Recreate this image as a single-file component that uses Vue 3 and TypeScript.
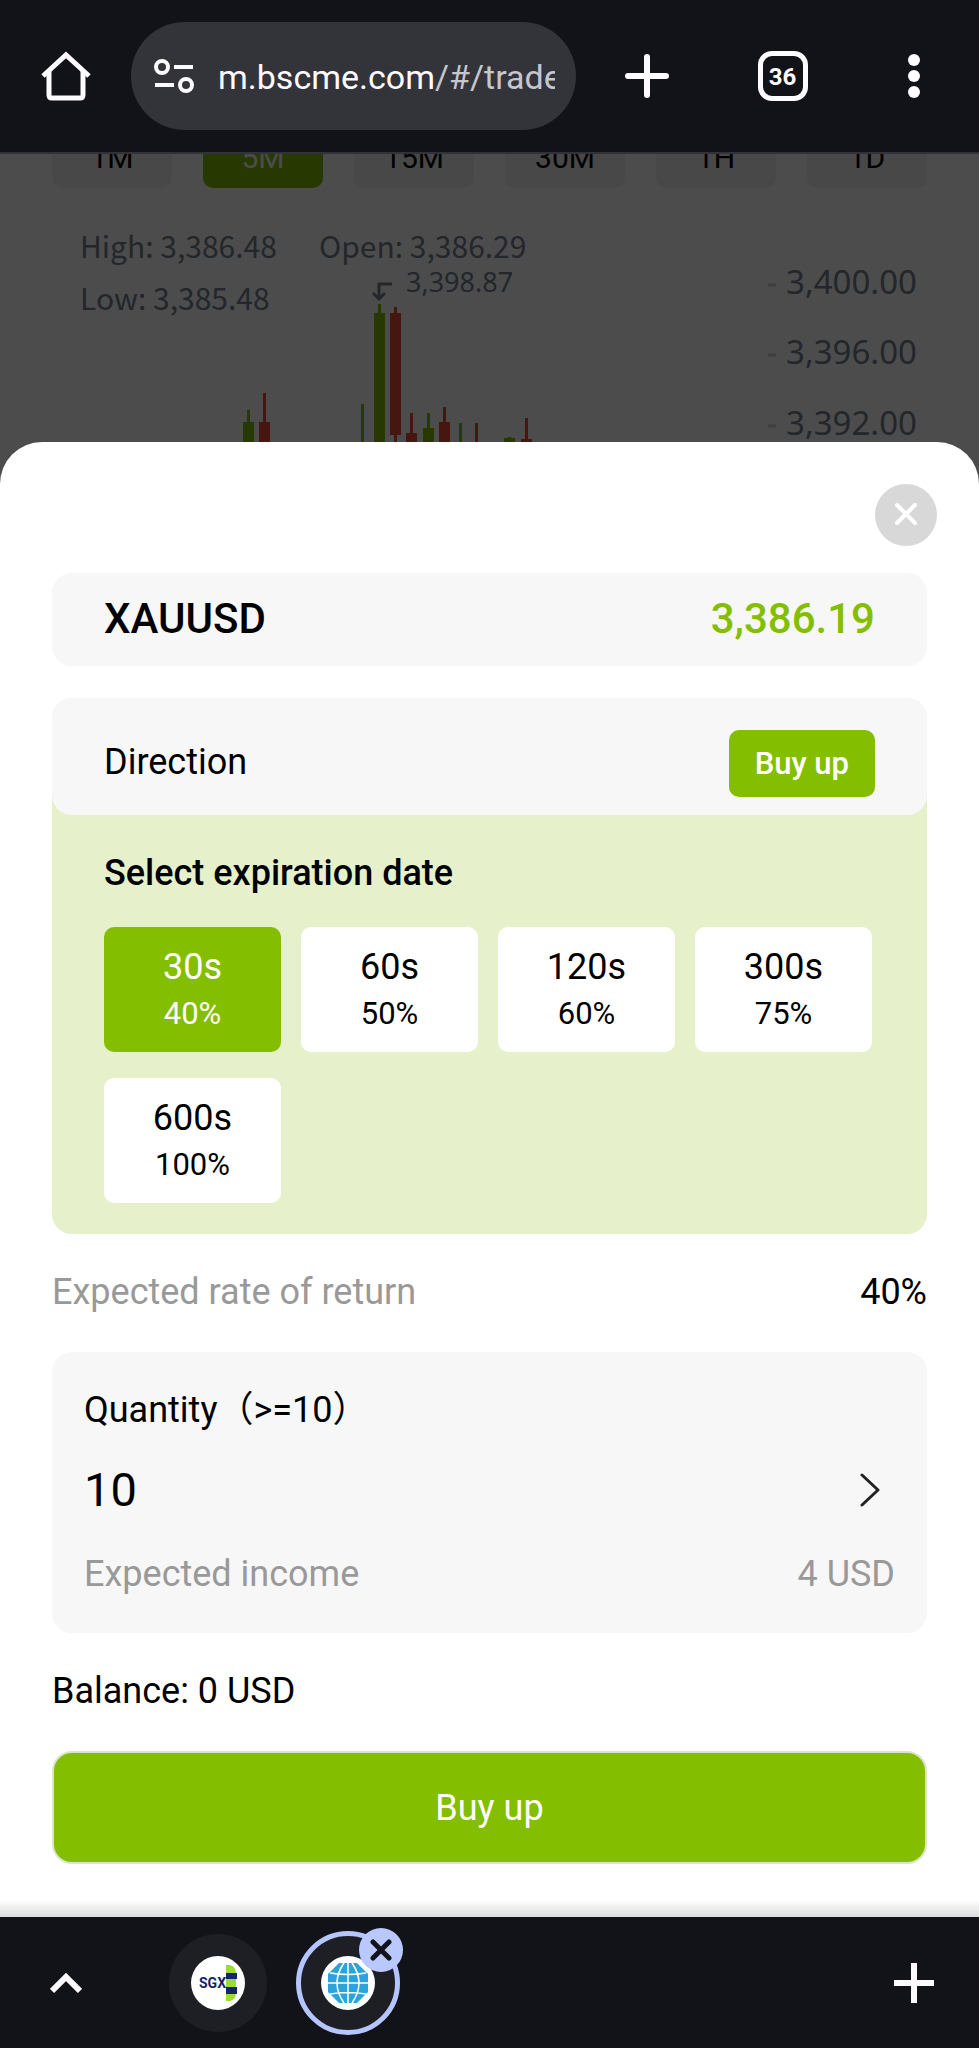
<script setup lang="ts">
import { computed, ref } from 'vue'

interface Term {
  seconds: number
  rate: number
}

interface Candle {
  x: number
  up: boolean
  high: number
  low: number
  top?: number
  bottom?: number
}

const frames: string[] = ['1M', '5M', '15M', '30M', '1H', '1D']
const activeFrame = ref('5M')

const terms: Term[] = [
  { seconds: 30, rate: 40 },
  { seconds: 60, rate: 50 },
  { seconds: 120, rate: 60 },
  { seconds: 300, rate: 75 },
  { seconds: 600, rate: 100 },
]
const selected = ref<Term>(terms[0])
const quantity = ref('10')
const income = computed(() => ((Number(quantity.value) || 0) * selected.value.rate) / 100)

const axis = [
  { label: '3,400.00', y: 294 },
  { label: '3,396.00', y: 364 },
  { label: '3,392.00', y: 435 },
]

const candles: Candle[] = [
  { x: 248, up: true, high: 410, low: 442, top: 422, bottom: 442 },
  { x: 264, up: false, high: 393, low: 442, top: 422, bottom: 442 },
  { x: 362, up: true, high: 404, low: 442 },
  { x: 379, up: true, high: 304, low: 442, top: 313, bottom: 442 },
  { x: 395, up: false, high: 307, low: 442, top: 313, bottom: 435 },
  { x: 411, up: false, high: 413, low: 442, top: 433, bottom: 442 },
  { x: 428, up: true, high: 413, low: 442, top: 428, bottom: 442 },
  { x: 444, up: false, high: 407, low: 442, top: 422, bottom: 442 },
  { x: 460, up: true, high: 423, low: 442 },
  { x: 476, up: false, high: 423, low: 442 },
  { x: 509, up: true, high: 437, low: 442, top: 438, bottom: 442 },
  { x: 526, up: false, high: 418, low: 442, top: 439, bottom: 442 },
]
</script>

<template>
  <div class="page">
    <header class="toolbar">
      <button class="tool" type="button" aria-label="Home">
        <svg width="50" height="50" viewBox="0 0 50 50" fill="none" stroke="#fdfbff" stroke-width="5">
          <path d="M2 25 25 4 48 25" stroke-linejoin="miter" />
          <path d="M8 20V44Q8 47 11 47H39Q42 47 42 44V20" />
        </svg>
      </button>
      <button class="address" type="button" aria-label="Edit address">
        <svg class="tune" width="40" height="36" viewBox="0 0 40 36" fill="none" stroke="#fdfbff" stroke-width="4">
          <circle cx="8" cy="9" r="6" />
          <path d="M20 9H39M1 27H20" />
          <circle cx="32" cy="27" r="6" />
        </svg>
        <span class="url">m.bscme.com<span class="path">/#/trade</span></span>
      </button>
      <button class="tool tool-new" type="button" aria-label="New tab">
        <svg width="44" height="44" viewBox="0 0 44 44" stroke="#fdfbff" stroke-width="6" stroke-linecap="round">
          <path d="M22 3V41M3 22H41" />
        </svg>
      </button>
      <button class="tool" type="button" aria-label="Open tabs">
        <span class="tab-count">36</span>
      </button>
      <button class="tool" type="button" aria-label="Menu">
        <svg width="12" height="44" viewBox="0 0 12 44" fill="#fdfbff">
          <circle cx="6" cy="6" r="6" />
          <circle cx="6" cy="22" r="6" />
          <circle cx="6" cy="38" r="6" />
        </svg>
      </button>
    </header>

    <section class="market">
      <nav class="frames">
        <button
          v-for="f in frames"
          :key="f"
          type="button"
          :class="{ active: f === activeFrame }"
          @click="activeFrame = f"
        >
          {{ f }}
        </button>
      </nav>
      <svg class="chart" viewBox="0 188 979 254">
        <g class="legend">
          <text x="80" y="258">High: 3,386.48</text>
          <text x="319" y="258">Open: 3,386.29</text>
          <text x="80" y="310">Low: 3,385.48</text>
        </g>
        <text class="peak" x="406" y="292">3,398.87</text>
        <path class="hook" d="M392 284H379V298M373 293 379 299 385 293" />
        <g v-for="a in axis" :key="a.label">
          <path class="tick" :d="`M768 ${a.y - 9}h8`" />
          <text class="price" x="786" :y="a.y">{{ a.label }}</text>
        </g>
        <g v-for="c in candles" :key="c.x" :class="c.up ? 'rise' : 'fall'">
          <rect :x="c.x - 1" :y="c.high" width="3" :height="c.low - c.high" />
          <rect
            v-if="c.top !== undefined && c.bottom !== undefined"
            :x="c.x - 5"
            :y="c.top"
            width="11"
            :height="c.bottom - c.top"
          />
        </g>
      </svg>
    </section>

    <main class="sheet">
      <div class="sheet-top">
        <button class="close" type="button" aria-label="Close">
          <svg width="24" height="24" viewBox="0 0 24 24" stroke="#fff" stroke-width="4" stroke-linecap="round">
            <path d="M3 2 21 20M21 2 3 20" />
          </svg>
        </button>
      </div>

      <div class="content">
        <section class="card symbol">
          <span>XAUUSD</span>
          <span class="quote">3,386.19</span>
        </section>

        <section class="order">
          <div class="card direction">
            <span>Direction</span>
            <button type="button">Buy up</button>
          </div>
          <div class="expiry">
            <h2>Select expiration date</h2>
            <div class="terms">
              <button
                v-for="t in terms"
                :key="t.seconds"
                type="button"
                :class="{ active: t.seconds === selected.seconds }"
                @click="selected = t"
              >
                <span class="seconds">{{ t.seconds }}s</span>
                <span class="rate">{{ t.rate }}%</span>
              </button>
            </div>
          </div>
        </section>

        <div class="line">
          <span class="muted">Expected rate of return</span>
          <span>{{ selected.rate }}%</span>
        </div>

        <section class="card amount">
          <label for="quantity">Quantity（&gt;=10）</label>
          <div class="entry">
            <input id="quantity" v-model="quantity" type="text" inputmode="numeric" />
            <button type="button" aria-label="Choose quantity">
              <svg width="20" height="34" viewBox="0 0 20 34" fill="none" stroke="#222" stroke-width="3" stroke-linecap="round" stroke-linejoin="round">
                <path d="M2 2 18 17 2 32" />
              </svg>
            </button>
          </div>
          <div class="income muted">
            <span>Expected income</span>
            <span>{{ income }} USD</span>
          </div>
        </section>

        <div class="line">Balance: 0 USD</div>

        <button class="submit" type="button">Buy up</button>
      </div>
      <div class="shade"></div>
    </main>

    <footer class="tabstrip">
      <button class="tool" type="button" aria-label="Show tab group">
        <svg width="32" height="22" viewBox="0 0 32 22" fill="none" stroke="#fdfbff" stroke-width="6">
          <path d="M2 19 16 5 30 19" />
        </svg>
      </button>
      <div class="tabs">
        <button class="site" type="button" aria-label="SGX tab">
          <svg width="56" height="56" viewBox="0 0 56 56">
            <circle cx="28" cy="28" r="27" fill="#fff" />
            <text class="sgx" x="9" y="33">SGX</text>
            <path d="M36 10h4q6 2 6 8v21q-1 6-6 7h-4z" fill="#9bdc35" />
            <path d="M36 18h11v6H36zM36 32h11v7H36z" fill="#13246b" />
          </svg>
        </button>
        <div class="current">
          <button class="site site-current" type="button" aria-label="Current tab">
            <svg width="56" height="56" viewBox="0 0 56 56">
              <circle cx="28" cy="28" r="27" fill="#fff" />
              <path d="M19 8H37L48 19V37L37 48H19L8 37V19Z" fill="#29a5dc" />
              <g fill="none" stroke="#fff" stroke-width="1.5">
                <path d="M28 8V48M8 28H48M10 18Q28 21 46 18M10 39Q28 36 46 39" />
                <path d="M24 8Q10 28 24 48M32 8Q46 28 32 48" />
              </g>
            </svg>
          </button>
          <button class="badge" type="button" aria-label="Close tab">
            <svg width="22" height="22" viewBox="0 0 22 22" stroke="#121318" stroke-width="5" stroke-linecap="round">
              <path d="M3 3 19 19M19 3 3 19" />
            </svg>
          </button>
        </div>
      </div>
      <button class="tool" type="button" aria-label="New tab in group">
        <svg width="40" height="40" viewBox="0 0 40 40" stroke="#fdfbff" stroke-width="6">
          <path d="M20 0V40M0 20H40" />
        </svg>
      </button>
    </footer>
  </div>
</template>

<style>
body {
  background: #121318;
}
</style>

<style scoped>
.page {
  display: flex;
  flex-direction: column;
  background: #4c4c4c;
  color: #000;
  font-family: Roboto, 'Noto Sans CJK SC', sans-serif;
  font-size: 36px;
  line-height: 48px;
}

button {
  display: flex;
  align-items: center;
  justify-content: center;
  margin: 0;
  padding: 0;
  border: 0;
  background: none;
  color: inherit;
  font: inherit;
  cursor: pointer;
}

.toolbar {
  display: flex;
  align-items: center;
  height: 152px;
  background: #121318;
  border-bottom: 2px solid #313238;
}

.tool {
  flex: none;
  align-self: stretch;
  width: 131px;
}

.tool-new {
  width: 141px;
}

.address {
  flex: 1;
  min-width: 0;
  height: 108px;
  gap: 24px;
  padding: 0 21px 0 23px;
  border-radius: 54px;
  background: #333439;
  color: #fdfbff;
}

.tune {
  flex: none;
}

.url {
  flex: 1;
  padding-top: 2px;
  overflow: hidden;
  text-align: left;
  font-size: 34px;
  white-space: nowrap;
}

.path {
  color: #c6c6cd;
}

.tab-count {
  box-sizing: border-box;
  width: 50px;
  height: 50px;
  border: 5px solid #fdfbff;
  border-radius: 14px;
  color: #fdfbff;
  font-size: 24px;
  font-weight: 700;
  line-height: 42px;
}

.market {
  position: relative;
  overflow: hidden;
  background: #fff;
}

.market::after {
  content: '';
  position: absolute;
  inset: 0;
  background: rgba(0, 0, 0, 0.7);
}

.frames {
  display: grid;
  grid-template-columns: repeat(6, 1fr);
  gap: 31px;
  margin-top: -26px;
  padding: 0 52px;
}

.frames button {
  height: 60px;
  border-radius: 10px;
  background: #f0f0f0;
  font-size: 30px;
}

.frames .active {
  background: #84be00;
  color: #fff;
}

.chart {
  display: block;
  width: 100%;
}

.chart text {
  fill: #76808f;
}

.legend {
  font-family: 'Noto Sans CJK SC', sans-serif;
  font-size: 30px;
}

.peak {
  font-family: 'Noto Sans', sans-serif;
  font-size: 27px;
}

.price {
  font-family: 'Noto Sans', sans-serif;
  font-size: 33px;
}

.hook {
  fill: none;
  stroke: #76808f;
  stroke-width: 3;
}

.tick {
  stroke: #d0d0d0;
  stroke-width: 3;
}

.rise {
  fill: #84be00;
}

.fall {
  fill: #f04a3a;
}

.sheet {
  border-radius: 42px 42px 0 0;
  background: #fff;
}

.sheet-top {
  display: flex;
  justify-content: flex-end;
  padding: 42px 42px 27px;
}

.close {
  width: 62px;
  height: 62px;
  border-radius: 50%;
  background: #d8d8d8;
}

.content {
  display: flex;
  flex-direction: column;
  padding: 0 52px 36px;
}

.card {
  border-radius: 20px;
  background: #f7f7f7;
}

.symbol {
  display: flex;
  justify-content: space-between;
  margin-bottom: 32px;
  padding: 22px 52px 23px;
  font-size: 42px;
  font-weight: 500;
}

.quote {
  color: #84be00;
}

.order {
  border-radius: 20px;
  background: #e6f0cb;
}

.direction {
  display: flex;
  align-items: baseline;
  justify-content: space-between;
  padding: 32px 52px 18px;
}

.direction button {
  padding: 0 26px;
  border-radius: 10px;
  background: #84be00;
  color: #fff;
  font-size: 31px;
  font-weight: 500;
  line-height: 67px;
}

.expiry {
  padding: 34px 55px 31px 52px;
}

h2 {
  margin: 0 0 30px;
  font-size: 36px;
  font-weight: 500;
}

.terms {
  display: grid;
  grid-template-columns: repeat(4, 1fr);
  gap: 26px 20px;
}

.terms button {
  flex-direction: column;
  padding: 16px 0 15px;
  border-radius: 10px;
  background: #fff;
}

.terms .active {
  background: #84be00;
  color: #fff;
}

.rate {
  font-size: 31px;
  line-height: 46px;
}

.line {
  display: flex;
  justify-content: space-between;
  padding: 34px 0 36px;
}

.muted {
  color: #999;
}

.amount {
  display: flex;
  flex-direction: column;
  padding: 34px 32px 35px;
}

.entry {
  display: flex;
  align-items: center;
  margin: 28px 0 32px;
  padding-right: 15px;
}

.entry input {
  flex: 1;
  min-width: 0;
  height: 56px;
  padding: 0;
  border: 0;
  outline: 0;
  background: none;
  color: #000;
  font-family: inherit;
  font-size: 47px;
  line-height: 56px;
}

.income {
  display: flex;
  justify-content: space-between;
}

.submit {
  height: 113px;
  border: 2px solid #dbe3cd;
  border-radius: 20px;
  background: #84be00;
  color: #fff;
}

.shade {
  height: 17px;
  background: linear-gradient(#fff, #dcdcde);
}

.tabstrip {
  display: flex;
  align-items: center;
  height: 131px;
  background: #121318;
}

.tabs {
  display: flex;
  flex: 1;
  align-items: center;
  gap: 29px;
  padding-left: 38px;
}

.site {
  width: 98px;
  height: 98px;
  border-radius: 50%;
  background: #1e1f24;
}

.current {
  position: relative;
}

.site-current {
  width: 104px;
  height: 104px;
  border: 5px solid #b4c5ff;
}

.badge {
  position: absolute;
  top: -3px;
  right: -3px;
  width: 44px;
  height: 44px;
  border-radius: 50%;
  background: #b9c8ff;
}

.sgx {
  fill: #13246b;
  font-family: Roboto, sans-serif;
  font-size: 14px;
  font-weight: 700;
}
</style>
